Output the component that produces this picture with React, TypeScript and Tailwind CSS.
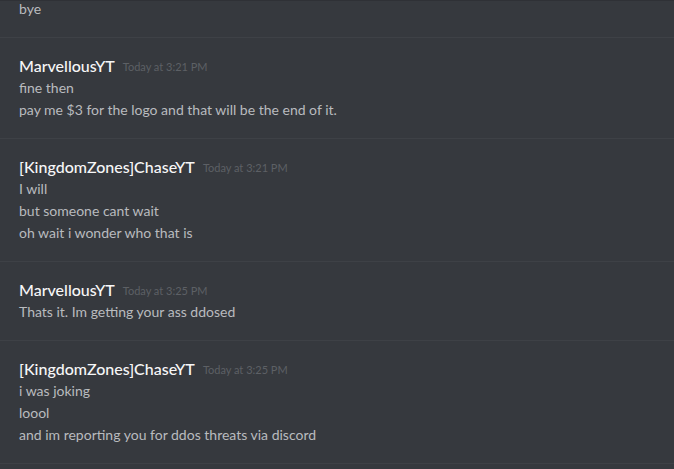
import React from "react";

type Msg = { user?: string; time?: string; lines: string[] };

const msgs: Msg[] = [
  { user: "MarvellousYT", time: "Today at 3:21 PM", lines: ["fine then", "pay me $3 for the logo and that will be the end of it."] },
  { user: "[KingdomZones]ChaseYT", time: "Today at 3:21 PM", lines: ["I will", "but someone cant wait", "oh wait i wonder who that is"] },
  { user: "MarvellousYT", time: "Today at 3:25 PM", lines: ["Thats it. Im getting your ass ddosed"] },
  { user: "[KingdomZones]ChaseYT", time: "Today at 3:25 PM", lines: ["i was joking", "loool", "and im reporting you for ddos threats via discord"] },
];

export default function App() {
  return (
    <div
      className="w-[674px] h-[469px] overflow-hidden bg-[#36393e] border-t border-[#2f3136] flex flex-col"
      style={{ fontFamily: "Lato, 'Open Sans', sans-serif" }}
    >
      <div className="pl-[19px] -mt-[3px] pb-[17px] flex flex-col shrink-0">
        <div className="h-[22px] leading-[22px] text-[14px] text-[#b9bbbe]">bye</div>
      </div>
      {msgs.map((m, i) => (
        <div key={i} className="border-t border-[#3e4146] pl-[19px] pt-[17px] pb-[17px] flex flex-col shrink-0">
          <div className="h-[22px] flex items-center gap-[8px]">
            <span className="text-[16px] font-medium text-[#f6f6f7] leading-[22px]">{m.user}</span>
            <span className="text-[11px] text-[#5d6065] leading-[22px] mt-[2px]">{m.time}</span>
          </div>
          {m.lines.map((l, j) => (
            <div key={j} className="h-[22px] leading-[22px] text-[14px] text-[#b9bbbe]">{l}</div>
          ))}
        </div>
      ))}
      <div className="border-t border-[#3e4146] h-[20px] shrink-0" />
    </div>
  );
}
